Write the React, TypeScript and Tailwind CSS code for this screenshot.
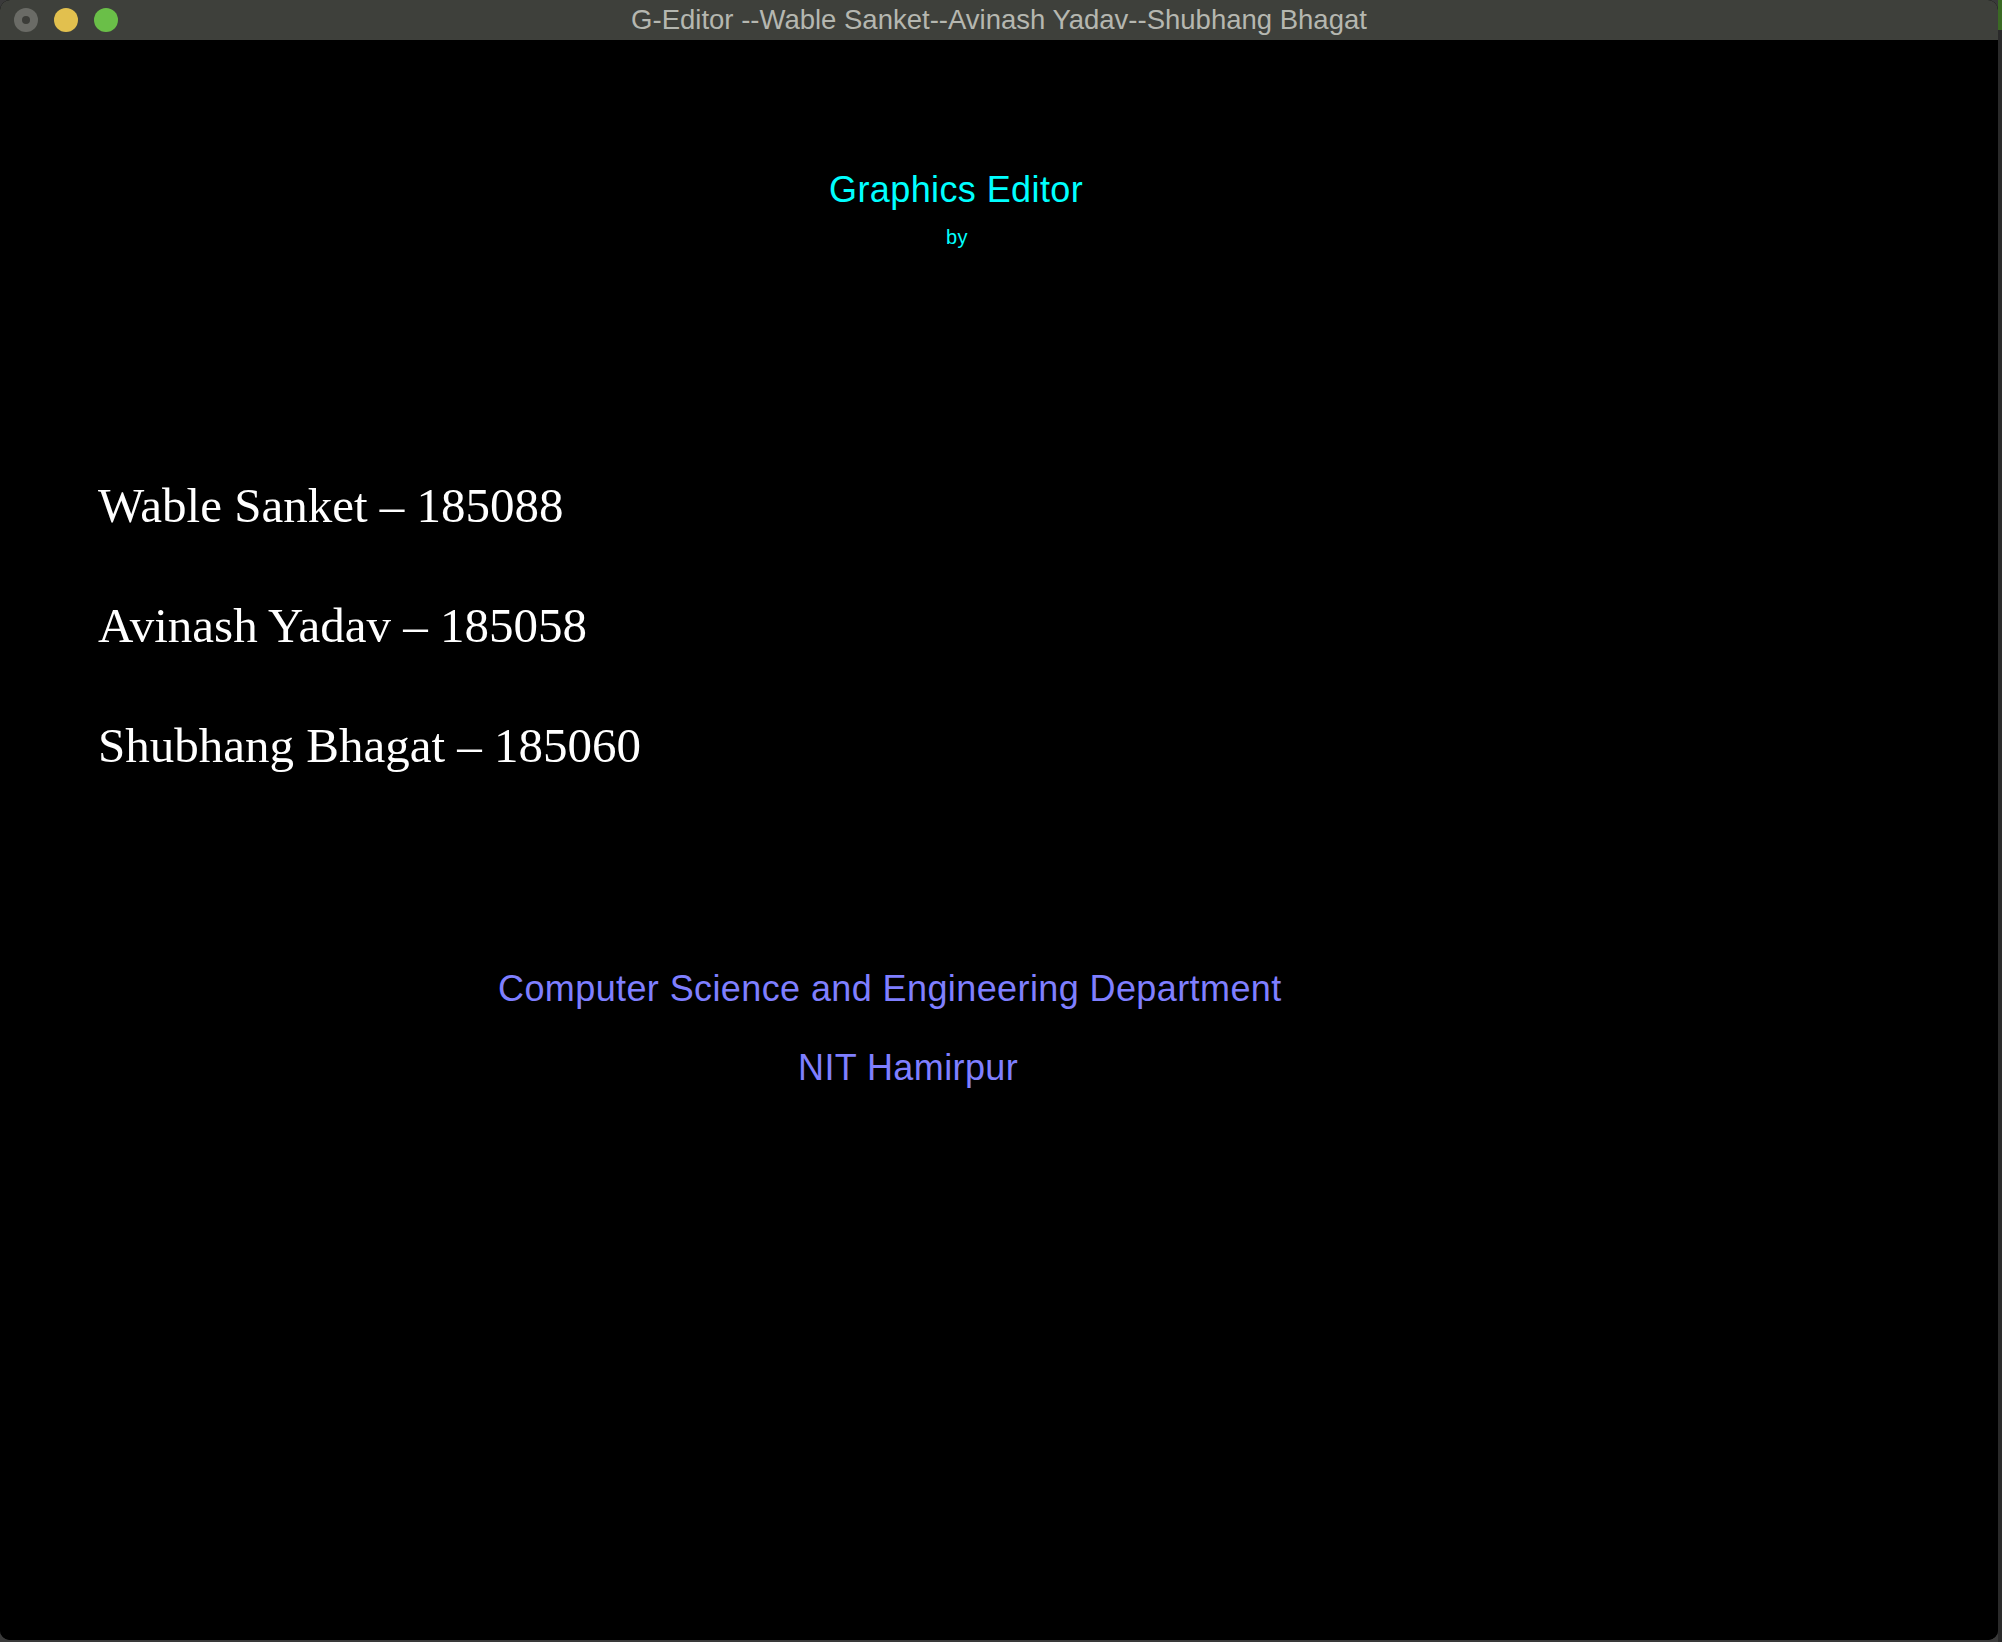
import React from 'react';

const names = [
  'Wable Sanket – 185088',
  'Avinash Yadav – 185058',
  'Shubhang Bhagat – 185060',
];

const sans = { fontFamily: '"Liberation Sans", Arial, sans-serif' };
const serif = { fontFamily: '"Liberation Serif", "Times New Roman", serif' };

const TrafficLights: React.FC = () => (
  <div className="absolute left-[14px] top-[8px] flex gap-[16px]">
    <div className="w-[24px] h-[24px] rounded-full bg-[#6a6b66] flex items-center justify-center">
      <div className="w-[8px] h-[8px] rounded-full bg-[#3c3d39]"></div>
    </div>
    <div className="w-[24px] h-[24px] rounded-full bg-[#e2c04e]"></div>
    <div className="w-[24px] h-[24px] rounded-full bg-[#6abf48]"></div>
  </div>
);

export default function App() {
  return (
    <div className="w-[2002px] h-[1642px] bg-[#3a3a3a] flex overflow-hidden">
      <div className="w-[1998px] h-[1640px] rounded-[10px] overflow-hidden flex flex-col bg-black">
        {/* Title bar */}
        <div className="relative h-[40px] shrink-0 bg-[#3e403b] flex items-center justify-center">
          <TrafficLights />
          <span className="text-[27.5px] leading-none text-[#b5b7b0]" style={sans}>
            G-Editor --Wable Sanket--Avinash Yadav--Shubhang Bhagat
          </span>
        </div>

        {/* Canvas */}
        <div className="flex-1 bg-black flex flex-col pt-[132px] tracking-[0.4px]" style={sans}>
          <div className="pl-[829px] text-[36px] leading-none text-[#00ffff]">Graphics Editor</div>
          <div className="pl-[946px] mt-[19px] text-[20px] leading-none text-[#00ffff]">by</div>

          <div className="mt-[234px] pl-[98px] flex flex-col gap-[71px] tracking-normal" style={serif}>
            {names.map(n => (
              <div key={n} className="text-[49px] leading-none text-white">{n}</div>
            ))}
          </div>

          <div className="mt-[201px] pl-[498px] text-[36px] leading-none text-[#7f7fff]">
            Computer Science and Engineering Department
          </div>
          <div className="mt-[43px] pl-[798px] text-[36px] leading-none text-[#7f7fff]">NIT Hamirpur</div>
        </div>
      </div>
      <div className="w-[4px] flex flex-col">
        <div className="h-[30px] bg-[#3b6a24]"></div>
        <div className="flex-1 bg-[#2a2a2a]"></div>
      </div>
    </div>
  );
}
